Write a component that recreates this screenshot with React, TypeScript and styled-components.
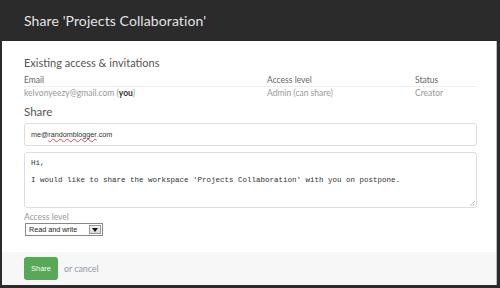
import React from "react";
import styled, { createGlobalStyle } from "styled-components";

const Global = createGlobalStyle`
  html, body { margin: 0; padding: 0; background: #2b2b2b; }
  body { font-family: "Lato", "Open Sans", sans-serif; }
`;

const Frame = styled.div`
  width: 500px;
  height: 288px;
  box-sizing: border-box;
  background: #2b2b2b;
  padding: 0 3px 3px 2px;
  display: flex;
  flex-direction: column;
`;

const Header = styled.div`
  height: 41px;
  flex: none;
  display: flex;
  align-items: center;
  padding-left: 22px;
  color: #e4e4e4;
  font-size: 14px;
  letter-spacing: 0.1px;
`;

const Body = styled.div`
  flex: 1;
  background: #fff;
  border-right: 1px solid #bdbdbd;
  padding: 14px 19px 0 22px;
  display: flex;
  flex-direction: column;
`;

const SectionTitle = styled.div`
  font-size: 11px;
  color: #555;
  line-height: 16px;
`;

const Table = styled.div`
  margin-top: 2px;
  display: grid;
  grid-template-columns: 243px 148px 1fr;
  font-size: 8.5px;
`;

const HeadCell = styled.div`
  color: #666;
  line-height: 12px;
  padding-top: 1px;
  border-bottom: 1px solid #eee;
`;

const Cell = styled.div`
  color: #999;
  line-height: 12px;
  b { color: #333; }
`;

const Share = styled(SectionTitle)`
  margin-top: 5px;
  font-size: 11.5px;
`;

const Input = styled.div`
  margin-top: 3px;
  height: 21px;
  border: 1px solid #ddd;
  border-radius: 3px;
  display: flex;
  align-items: center;
  padding-left: 6px;
  font-family: "Liberation Sans", Arial, sans-serif;
  font-size: 7.2px;
  color: #333;
`;

const Squiggle = styled.span`
  text-decoration: underline wavy #e05050;
  text-decoration-thickness: 0.5px;
  text-underline-offset: 1px;
`;

const TextArea = styled.div`
  margin-top: 6px;
  height: 56px;
  border: 1px solid #ddd;
  border-radius: 3px;
  position: relative;
  padding: 6px 6px;
  box-sizing: border-box;
  font-family: "Liberation Mono", "Courier New", monospace;
  font-size: 7.5px;
  line-height: 8.5px;
  color: #333;
  white-space: pre;
`;

const Grip = styled.svg`
  position: absolute;
  right: 1px;
  bottom: 1px;
`;

const Label = styled.div`
  margin-top: 4px;
  font-size: 8.5px;
  color: #999;
  line-height: 11px;
`;

const Select = styled.div`
  margin-top: 0px;
  margin-left: 1px;
  width: 76px;
  height: 11px;
  border: 1px solid #888;
  display: flex;
  align-items: center;
  font-family: "Liberation Sans", Arial, sans-serif;
  font-size: 7.2px;
  color: #222;
  box-sizing: content-box;
`;

const SelectText = styled.span`
  flex: 1;
  padding-left: 3px;
`;

const Arrow = styled.span`
  width: 12px;
  height: 9px;
  margin-right: 1px;
  background: linear-gradient(#f4f4f4, #d8d8d8);
  border: 1px solid #999;
  box-sizing: border-box;
  display: flex;
  align-items: center;
  justify-content: center;
`;

const Footer = styled.div`
  height: 33px;
  flex: none;
  background: #f7f7f7;
  border-right: 1px solid #bdbdbd;
  display: flex;
  align-items: center;
  padding-left: 22px;
  gap: 6px;
`;

const Button = styled.div`
  width: 34px;
  height: 23px;
  background: #58a858;
  border-radius: 3px;
  color: #f4fff4;
  font-family: "Liberation Sans", Arial, sans-serif;
  font-size: 7.5px;
  display: flex;
  align-items: center;
  justify-content: center;
`;

const Cancel = styled.span`
  font-size: 8.8px;
  color: #8e9aa6;
`;

export default function App() {
  return (
    <>
      <Global />
      <Frame>
        <Header>Share 'Projects Collaboration'</Header>
        <Body>
          <SectionTitle>Existing access &amp; invitations</SectionTitle>
          <Table>
            <HeadCell>Email</HeadCell>
            <HeadCell>Access level</HeadCell>
            <HeadCell>Status</HeadCell>
            <Cell>
              kelvonyeezy@gmail.com (<b>you</b>)
            </Cell>
            <Cell>Admin (can share)</Cell>
            <Cell>Creator</Cell>
          </Table>
          <Share>Share</Share>
          <Input>
            me@<Squiggle>randomblogger</Squiggle>.com
          </Input>
          <TextArea>
            {"Hi,\n\nI would like to share the workspace 'Projects Collaboration' with you on postpone."}
            <Grip width="6" height="6" viewBox="0 0 6 6">
              <path d="M6 1L1 6M6 3.5L3.5 6" stroke="#aaa" strokeWidth="0.8" />
            </Grip>
          </TextArea>
          <Label>Access level</Label>
          <Select>
            <SelectText>Read and write</SelectText>
            <Arrow>
              <svg width="6" height="4" viewBox="0 0 6 4">
                <path d="M0 0H6L3 4Z" fill="#111" />
              </svg>
            </Arrow>
          </Select>
        </Body>
        <Footer>
          <Button>Share</Button>
          <Cancel>or cancel</Cancel>
        </Footer>
      </Frame>
    </>
  );
}
